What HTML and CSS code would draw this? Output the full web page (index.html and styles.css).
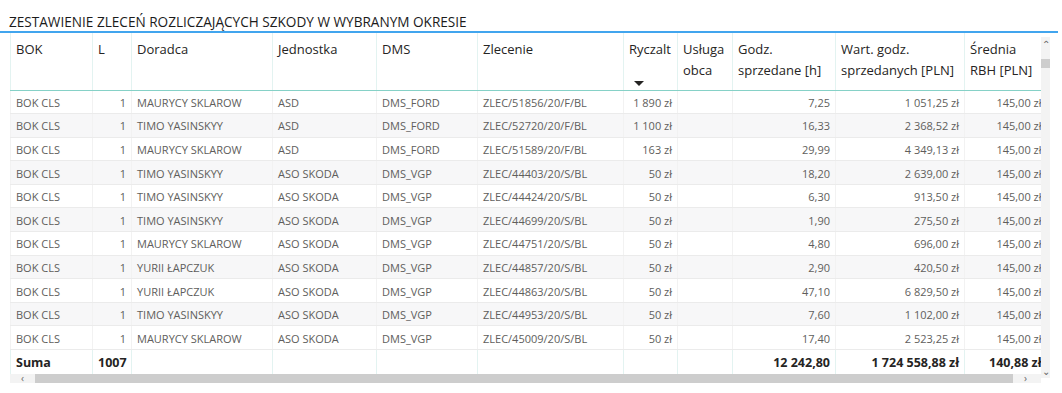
FILE: index.html
```html
<!DOCTYPE html>
<html lang="pl">
<head>
<meta charset="utf-8">
<link rel="stylesheet" href="styles.css">
</head>
<body>
<div class="title">ZESTAWIENIE ZLECEŃ ROZLICZAJĄCYCH SZKODY W WYBRANYM OKRESIE</div>
<div class="frame">
  <div class="main">
    <div class="viewport">
      <table class="grid">
        <colgroup>
          <col class="c-bok"><col class="c-l"><col class="c-dor"><col class="c-jed"><col class="c-dms"><col class="c-zle"><col class="c-ryc"><col class="c-usl"><col class="c-god"><col class="c-war"><col class="c-sre">
        </colgroup>
        <thead>
          <tr>
            <th>BOK</th><th>L</th><th>Doradca</th><th>Jednostka</th><th>DMS</th><th>Zlecenie</th>
            <th>Ryczalt<div class="sort"></div></th>
            <th>Usługa obca</th>
            <th>Godz. sprzedane [h]</th>
            <th>Wart. godz. sprzedanych [PLN]</th>
            <th>Średnia RBH [PLN]</th>
          </tr>
        </thead>
        <tbody>
          <tr><td>BOK CLS</td><td class="n">1</td><td>MAURYCY SKLAROW</td><td>ASD</td><td>DMS_FORD</td><td>ZLEC/51856/20/F/BL</td><td class="n">1&nbsp;890 zł</td><td></td><td class="n">7,25</td><td class="n">1&nbsp;051,25 zł</td><td class="n">145,00 zł</td></tr>
          <tr><td>BOK CLS</td><td class="n">1</td><td>TIMO YASINSKYY</td><td>ASD</td><td>DMS_FORD</td><td>ZLEC/52720/20/F/BL</td><td class="n">1&nbsp;100 zł</td><td></td><td class="n">16,33</td><td class="n">2&nbsp;368,52 zł</td><td class="n">145,00 zł</td></tr>
          <tr><td>BOK CLS</td><td class="n">1</td><td>MAURYCY SKLAROW</td><td>ASD</td><td>DMS_FORD</td><td>ZLEC/51589/20/F/BL</td><td class="n">163 zł</td><td></td><td class="n">29,99</td><td class="n">4&nbsp;349,13 zł</td><td class="n">145,00 zł</td></tr>
          <tr><td>BOK CLS</td><td class="n">1</td><td>TIMO YASINSKYY</td><td>ASO SKODA</td><td>DMS_VGP</td><td>ZLEC/44403/20/S/BL</td><td class="n">50 zł</td><td></td><td class="n">18,20</td><td class="n">2&nbsp;639,00 zł</td><td class="n">145,00 zł</td></tr>
          <tr><td>BOK CLS</td><td class="n">1</td><td>TIMO YASINSKYY</td><td>ASO SKODA</td><td>DMS_VGP</td><td>ZLEC/44424/20/S/BL</td><td class="n">50 zł</td><td></td><td class="n">6,30</td><td class="n">913,50 zł</td><td class="n">145,00 zł</td></tr>
          <tr><td>BOK CLS</td><td class="n">1</td><td>TIMO YASINSKYY</td><td>ASO SKODA</td><td>DMS_VGP</td><td>ZLEC/44699/20/S/BL</td><td class="n">50 zł</td><td></td><td class="n">1,90</td><td class="n">275,50 zł</td><td class="n">145,00 zł</td></tr>
          <tr><td>BOK CLS</td><td class="n">1</td><td>MAURYCY SKLAROW</td><td>ASO SKODA</td><td>DMS_VGP</td><td>ZLEC/44751/20/S/BL</td><td class="n">50 zł</td><td></td><td class="n">4,80</td><td class="n">696,00 zł</td><td class="n">145,00 zł</td></tr>
          <tr><td>BOK CLS</td><td class="n">1</td><td>YURII ŁAPCZUK</td><td>ASO SKODA</td><td>DMS_VGP</td><td>ZLEC/44857/20/S/BL</td><td class="n">50 zł</td><td></td><td class="n">2,90</td><td class="n">420,50 zł</td><td class="n">145,00 zł</td></tr>
          <tr><td>BOK CLS</td><td class="n">1</td><td>YURII ŁAPCZUK</td><td>ASO SKODA</td><td>DMS_VGP</td><td>ZLEC/44863/20/S/BL</td><td class="n">50 zł</td><td></td><td class="n">47,10</td><td class="n">6&nbsp;829,50 zł</td><td class="n">145,00 zł</td></tr>
          <tr><td>BOK CLS</td><td class="n">1</td><td>TIMO YASINSKYY</td><td>ASO SKODA</td><td>DMS_VGP</td><td>ZLEC/44953/20/S/BL</td><td class="n">50 zł</td><td></td><td class="n">7,60</td><td class="n">1&nbsp;102,00 zł</td><td class="n">145,00 zł</td></tr>
          <tr><td>BOK CLS</td><td class="n">1</td><td>MAURYCY SKLAROW</td><td>ASO SKODA</td><td>DMS_VGP</td><td>ZLEC/45009/20/S/BL</td><td class="n">50 zł</td><td></td><td class="n">17,40</td><td class="n">2&nbsp;523,25 zł</td><td class="n">145,00 zł</td></tr>
        </tbody>
        <tfoot>
          <tr><td>Suma</td><td class="n">1007</td><td></td><td></td><td></td><td></td><td></td><td></td><td class="n">12&nbsp;242,80</td><td class="n">1&nbsp;724&nbsp;558,88 zł</td><td class="n">140,88 zł</td></tr>
        </tfoot>
      </table>
    </div>
    <div class="hscroll">
      <span class="arrow">&lsaquo;</span>
      <div class="hthumb"></div>
      <span class="arrow">&rsaquo;</span>
    </div>
  </div>
  <div class="vscroll">
    <span class="varrow">&#8963;</span>
    <div class="vthumb"></div>
    <div class="vspace"></div>
    <span class="varrow down">&#8964;</span>
  </div>
</div>
</body>
</html>
```
FILE: styles.css
```css
html, body {
  margin: 0;
  background: #ffffff;
}
body {
  font-family: "Open Sans", "Noto Sans", sans-serif;
  color: #252423;
}
.title {
  height: 33px;
  width: 1058px;
  box-sizing: border-box;
  padding: 13px 0 0 9px;
  font-size: 13.6px;
  line-height: 18px;
  color: #1b1b1b;
  border-bottom: 2px solid #41a5ee;
  white-space: nowrap;
}
.frame {
  display: flex;
  margin-left: 10px;
  width: 1040px;
}
.main {
  width: 1031px;
  display: flex;
  flex-direction: column;
}
.viewport {
  width: 1031px;
  overflow: hidden;
}
.grid {
  table-layout: fixed;
  border-collapse: collapse;
  width: 1036px;
}
.c-bok { width: 82px; }
.c-l { width: 39px; }
.c-dor { width: 141px; }
.c-jed { width: 104px; }
.c-dms { width: 101px; }
.c-zle { width: 146px; }
.c-ryc { width: 54px; }
.c-usl { width: 55px; }
.c-god { width: 103px; }
.c-war { width: 129px; }
.c-sre { width: 82px; }
.grid th {
  height: 57px;
  box-sizing: border-box;
  vertical-align: top;
  text-align: left;
  font-weight: normal;
  font-size: 13px;
  line-height: 21px;
  color: #252423;
  padding: 6px 5px 0 5px;
  border-left: 1px solid #e3f3f1;
  border-bottom: 1px solid #86d1c7;
}
.sort {
  width: 0;
  height: 0;
  margin: 21px 0 0 5px;
  border-left: 5px solid transparent;
  border-right: 5px solid transparent;
  border-top: 5px solid #252423;
}
.grid td {
  height: 23.6px;
  box-sizing: border-box;
  padding: 1px 5px 0 5px;
  font-size: 11px;
  line-height: 21px;
  color: #605e5c;
  white-space: nowrap;
  overflow: hidden;
  border-left: 1px solid #f2f2f2;
  border-bottom: 1px solid #ebebeb;
}
.grid tbody tr:nth-child(even) td { background: #f7f7f8; }
.grid td.n { text-align: right; }
.grid tfoot td {
  height: 24px;
  font-size: 12.5px;
  font-weight: bold;
  color: #252423;
  border-top: 1px solid #5cb5a8;
  border-bottom: none;
  border-left: 1px solid #e3f3f1;
}
.hscroll {
  height: 9px;
  background: #f3f3f3;
  display: flex;
  align-items: center;
  font-size: 10px;
  line-height: 9px;
  color: #666;
}
.hscroll .arrow {
  width: 25px;
  text-align: center;
}
.hthumb {
  width: 978px;
  height: 9px;
  background: #cdcdcd;
}
.vscroll {
  width: 9px;
  margin-top: 4px;
  height: 341px;
  background: #f3f3f3;
  display: flex;
  flex-direction: column;
  align-items: center;
  font-size: 10px;
  color: #666;
}
.varrow {
  height: 14px;
  line-height: 14px;
}
.vthumb {
  margin-top: 8px;
  width: 9px;
  height: 9px;
  background: #cdcdcd;
}
.vspace { flex: 1; }
```
